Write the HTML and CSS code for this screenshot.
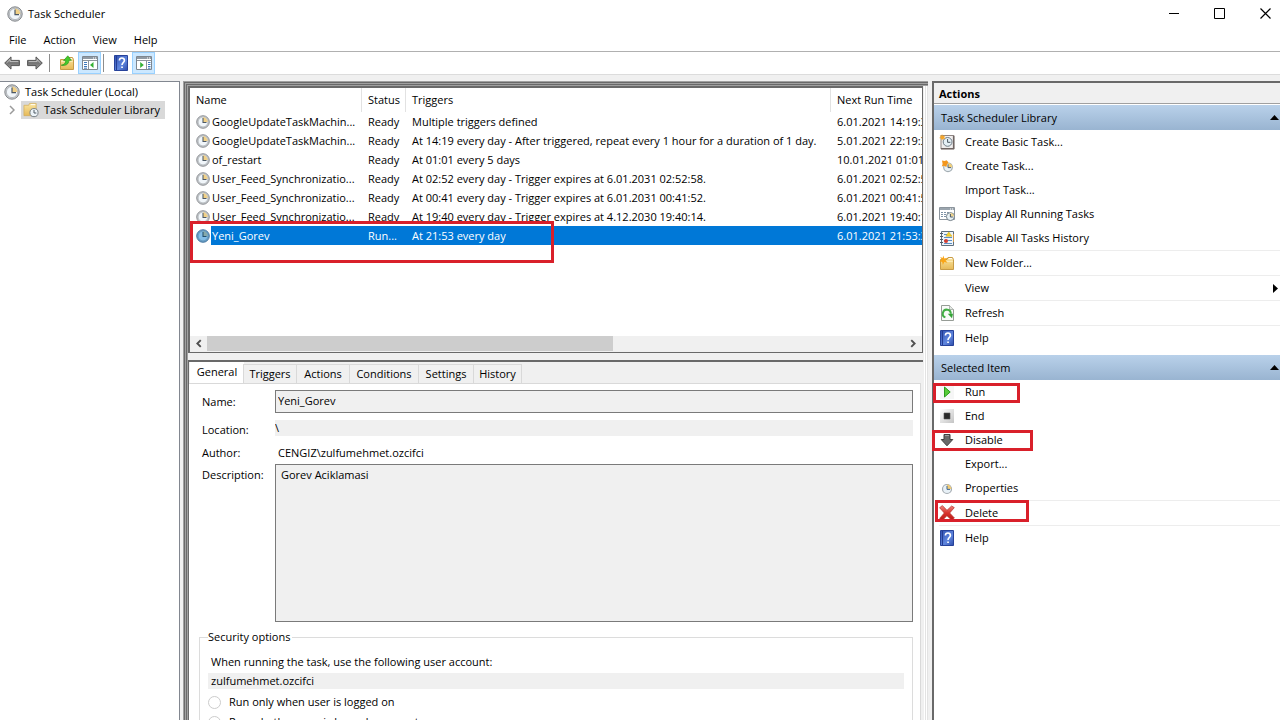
FILE: index.html
```html
<!DOCTYPE html>
<html lang="en">
<head>
<meta charset="utf-8">
<meta name="viewport" content="width=device-width, initial-scale=1">
<title>Task Scheduler</title>
<link rel="stylesheet" href="styles.css">
</head>
<body>
<svg class="defs" aria-hidden="true">
  <defs>
    <linearGradient id="g-arrow" x1="0" y1="0" x2="0" y2="1"><stop offset="0" stop-color="#a8a8a8"/><stop offset=".5" stop-color="#747474"/><stop offset="1" stop-color="#9c9c9c"/></linearGradient>
    <linearGradient id="g-folder" x1="0" y1="0" x2="0" y2="1"><stop offset="0" stop-color="#fbe6a2"/><stop offset="1" stop-color="#e6b957"/></linearGradient>
    <linearGradient id="g-help" x1="0" y1="0" x2="1" y2="1"><stop offset="0" stop-color="#2f4fb0"/><stop offset=".6" stop-color="#5f86de"/><stop offset="1" stop-color="#2d4ba8"/></linearGradient>
    <linearGradient id="g-stop" x1="0" y1="0" x2="1" y2="1"><stop offset="0" stop-color="#ffffff"/><stop offset="1" stop-color="#c4c4c4"/></linearGradient>
    <linearGradient id="g-red" x1="0" y1="0" x2="0" y2="1"><stop offset="0" stop-color="#ef8a84"/><stop offset=".5" stop-color="#d8322b"/><stop offset="1" stop-color="#b81a16"/></linearGradient>
  </defs>
  <symbol id="clock" viewBox="0 0 16 16">
    <circle cx="8" cy="8" r="7.2" fill="#c9cccf" stroke="#83878b"/>
    <circle cx="8" cy="8" r="5.6" fill="#f1f6fa" stroke="#a3a8ad" stroke-width=".7"/>
    <path d="M8 8V2.6A5.4 5.4 0 0 1 13.4 8Z" fill="#f0d087"/>
    <path d="M8 3.4V8.6H12" fill="none" stroke="#4d5965" stroke-width="1.2"/>
  </symbol>
  <symbol id="clock-sel" viewBox="0 0 16 16">
    <circle cx="8" cy="8" r="7.2" fill="#6fa4cb" stroke="#386a96"/>
    <circle cx="8" cy="8" r="5.6" fill="#82bde6" stroke="#5588ae" stroke-width=".7"/>
    <path d="M8 8V2.6A5.4 5.4 0 0 1 13.4 8Z" fill="#86a9a9"/>
    <path d="M8 3.4V8.6H12" fill="none" stroke="#23506f" stroke-width="1.2"/>
  </symbol>
  <symbol id="back" viewBox="0 0 16 14">
    <path d="M.7 7 7 .9V4.4H15.4V9.6H7V13.1Z" fill="url(#g-arrow)" stroke="#555"/>
    <path d="M2.5 7 6 3.6V5.5H14.2" fill="none" stroke="#c8c8c8" stroke-width=".8"/>
  </symbol>
  <symbol id="forward" viewBox="0 0 16 14">
    <path d="M15.3 7 9 .9V4.4H.6V9.6H9V13.1Z" fill="url(#g-arrow)" stroke="#555"/>
    <path d="M1.8 5.5H10V3.6L13.5 7" fill="none" stroke="#c8c8c8" stroke-width=".8"/>
  </symbol>
  <symbol id="folder" viewBox="0 0 16 16">
    <path d="M1.5 14.5V4.5H8L9 2.5H13.5L14.5 4.5V14.5Z" fill="url(#g-folder)" stroke="#c79b46"/>
    <path d="M9.8 3.6H13" stroke="#fff" stroke-width="1"/>
    <path d="M2.3 6.4H13.8" stroke="#fff3c8" stroke-width=".8"/>
  </symbol>
  <symbol id="folder-up" viewBox="0 0 16 16">
    <use href="#folder"/>
    <path d="M2.2 10.2C5 9.8 6.6 8.4 6.8 5.6H4.6L8.8.8 12.4 5.3H10C9.8 9 7 11.2 2.2 10.2Z" fill="#45c92c" stroke="#238d14" stroke-width=".6"/>
  </symbol>
  <symbol id="folder-clock" viewBox="0 0 17 16">
    <path d="M1 14V3H6L7 1H14V14Z" fill="url(#g-folder)" stroke="#d3ad5c" stroke-width=".8"/>
    <path d="M8.2 2.3H13" stroke="#fff"/>
    <circle cx="11.7" cy="10.8" r="4.3" fill="#edf4f8" stroke="#6f7980"/>
    <path d="M11.7 8V11.2H14.2" fill="none" stroke="#44515c"/>
  </symbol>
  <symbol id="folder-new" viewBox="0 0 16 16">
    <use href="#folder"/>
    <path d="M4.2 .5 5.4 3.4 8.4 2.8 6.6 5.2 8.4 7.8 5.3 7.1 3.9 10 3.2 6.9.4 6.3 2.7 4.6 1.2 2 3.7 3Z" fill="#f9a517"/>
  </symbol>
  <symbol id="pane-left" viewBox="0 0 16 14">
    <path d="M.5.5H15.5V13.5H.5Z" fill="#fff" stroke="#7e8790"/>
    <path d="M1 1H15V3H1Z" fill="#909aa4"/><path d="M11 2H12M13 2H14" stroke="#fff"/>
    <path d="M1 4.5H15M6.5 5V13" stroke="#8d959d"/>
    <path d="M2 6.5H5M2 8.5H5M2 10.5H5M2 12.2H5" stroke="#3d79bd"/>
    <path d="M8 9 11.5 6V12Z" fill="#35b135"/>
  </symbol>
  <symbol id="pane-right" viewBox="0 0 16 14">
    <path d="M.5.5H15.5V13.5H.5Z" fill="#fff" stroke="#7e8790"/>
    <path d="M1 1H15V3H1Z" fill="#909aa4"/><path d="M11 2H12M13 2H14" stroke="#fff"/>
    <path d="M1 4.5H15M10.5 5V13" stroke="#8d959d"/>
    <path d="M12 6.5H14.5M12 8.5H14.5M12 10.5H14.5M12 12.2H14.5" stroke="#3d79bd"/>
    <path d="M7.8 9 4.2 6V12Z" fill="#35b135"/>
  </symbol>
  <symbol id="help" viewBox="0 0 14 16">
    <path d="M.5.5H13.5V15.5H.5Z" fill="url(#g-help)" stroke="#27429a"/>
    <path d="M2.5 1V15" stroke="#243d92"/>
    <path d="M5.4 5.6C5.4 3.8 6.4 3 7.9 3S10.4 4 10.4 5.4C10.4 7.4 8 7.6 8 10" fill="none" stroke="#fff" stroke-width="1.6"/>
    <path d="M7.2 11.4H8.9V13.1H7.2Z" fill="#fff"/>
  </symbol>
  <symbol id="basic" viewBox="0 0 16 16">
    <path d="M2 1.5H15V15H2Z" fill="#f0eeee" stroke="#8f8583"/>
    <path d="M14.6 2V14.6H2" fill="none" stroke="#6f6563" stroke-width="1.4"/>
    <circle cx="8.6" cy="7.9" r="4.4" fill="#e5f0f6" stroke="#6f7c86"/>
    <path d="M8.6 5V8.3H11.4" fill="none" stroke="#48545e"/>
    <path d="M3 0 3.9 2 6.2 1.4 5.2 3.2 6.4 5.2 4.1 4.7 3 6.6 2.1 4.5 0 4.1 1.8 3 .8 1.2 2.6 1.8Z" fill="#f4a62a"/>
  </symbol>
  <symbol id="new-clock" viewBox="0 0 16 16">
    <circle cx="9" cy="9.3" r="4.3" fill="#eaf2f6" stroke="#a3adb3" stroke-width="1.2"/>
    <path d="M9 9.3V5A4.3 4.3 0 0 1 13.3 9.3Z" fill="#f1cf78"/>
    <path d="M9 6.3V9.6H12" fill="none" stroke="#566370"/>
    <path d="M3 2.4 5.6 3 7.6 2.2 9.4 4.2 8 6.4 7.4 9 5 7.8 2.8 8.6 3.6 6Z" fill="#f3971d"/>
  </symbol>
  <symbol id="small-clock" viewBox="0 0 16 16">
    <circle cx="8" cy="9" r="4.5" fill="#e8f1f7" stroke="#a4abb1" stroke-width="1.2"/>
    <path d="M8 9V4.6A4.4 4.4 0 0 1 12.4 9Z" fill="#f0cb77"/>
    <path d="M8 6V9.4H11" fill="none" stroke="#3f6590"/>
  </symbol>
  <symbol id="running" viewBox="0 0 16 16">
    <path d="M.5 1.5H15.5V13.5H.5Z" fill="#fff" stroke="#8c959d"/>
    <path d="M1 2H15V4H1Z" fill="#9ba5ae"/><path d="M11 3H12M13 3H14" stroke="#fff"/>
    <path d="M2 6.5H4M5 6.5H7M8 6.5H10M2 8.5H4M5 8.5H7M2 10.5H4M5 10.5H7" stroke="#7e93a6"/>
    <circle cx="11.4" cy="10.6" r="4" fill="#e9f2f6" stroke="#737f88"/>
    <path d="M11.4 10.6V7A3.6 3.6 0 0 1 15 10.6Z" fill="#efd38d"/>
    <path d="M11.4 8V11H13.8" fill="none" stroke="#4a5762"/>
  </symbol>
  <symbol id="history" viewBox="0 0 16 16">
    <path d="M2.5 1.5H14.5V15.5H2.5Z" fill="#eef4fa" stroke="#5f6f7d"/>
    <path d="M1 3.5H4M1 6.5H4M1 9.5H4M1 12.5H4" stroke="#4e5a65"/>
    <path d="M5 4.5H8M5 7.5H13M5 10.5H13M5 13.5H13" stroke="#5b8fc2"/>
    <path d="M9.8 2 13 6.2H6.8Z" fill="#f6d32c" stroke="#c7a215" stroke-width=".5"/>
    <circle cx="7" cy="11" r="2" fill="#d23c30"/>
    <path d="M14.5 4V12" stroke="#d3984a"/>
  </symbol>
  <symbol id="refresh" viewBox="0 0 16 16">
    <path d="M2.5.5H10.5L14.5 4.5V15.5H2.5Z" fill="#f9fbf9" stroke="#969c96"/>
    <path d="M10.5.5V4.5H14.5" fill="#e4e8e4" stroke="#969c96" stroke-width=".7"/>
    <path d="M6.4 12.4A4 4 0 1 1 11.8 8.8" fill="none" stroke="#42ae45" stroke-width="2"/>
    <path d="M8.8 8.8H14L13 13.2Z" fill="#35a338"/>
  </symbol>
  <symbol id="run" viewBox="0 0 16 16">
    <path d="M1 1H15V15H1Z" fill="#f6f6f6"/>
    <path d="M5.5 3 11.2 8 5.5 13Z" fill="#57cb38" stroke="#2b9b1d"/>
  </symbol>
  <symbol id="end" viewBox="0 0 16 16">
    <path d="M1 1H15V15H1Z" fill="url(#g-stop)"/>
    <path d="M5 5H11V11H5Z" fill="#292929" stroke="#555" stroke-width=".6"/>
  </symbol>
  <symbol id="disable" viewBox="0 0 16 16">
    <path d="M5 2.5H11V7.5H13.8L8 13.8 2.2 7.5H5Z" fill="#696969" stroke="#3f3f3f"/>
    <path d="M6 3.5H10" stroke="#a0a0a0"/>
  </symbol>
  <symbol id="delete" viewBox="0 0 16 16">
    <path d="M.6 2.7 3.4.6 8 5.3 12.6 1 15.3 2.6 10.7 8 15.4 13 12.8 15.3 7.9 10.7 3.5 15.3.6 13.4 5.3 8Z" fill="url(#g-red)" stroke="#b5332e" stroke-width=".7"/>
  </symbol>
</svg>

<header class="titlebar">
  <svg class="i16"><use href="#clock"/></svg>
  <h1>Task Scheduler</h1>
  <div class="window-buttons">
    <button aria-label="Minimize"><svg class="i11"><path d="M0 5.5H10" stroke="#000"/></svg></button>
    <button aria-label="Maximize"><svg class="i11"><path d="M.5.5H10.5V10.5H.5Z" fill="none" stroke="#000"/></svg></button>
    <button aria-label="Close"><svg class="i11"><path d="M.5.5 10.5 10.5M10.5.5.5 10.5" stroke="#000" stroke-width="1.2"/></svg></button>
  </div>
</header>
<nav class="menubar">
  <button>File</button><button>Action</button><button>View</button><button>Help</button>
</nav>
<div class="toolbar">
  <button aria-label="Back"><svg class="i-arrow"><use href="#back"/></svg></button>
  <button aria-label="Forward"><svg class="i-arrow"><use href="#forward"/></svg></button>
  <span class="divider"></span>
  <button class="tool" aria-label="Up one level"><svg class="i16"><use href="#folder-up"/></svg></button>
  <button class="tool on" aria-label="Console tree"><svg class="i-arrow"><use href="#pane-left"/></svg></button>
  <span class="divider tight"></span>
  <button class="tool" aria-label="Help"><svg class="i16"><use href="#help"/></svg></button>
  <button class="tool on" aria-label="Action pane"><svg class="i-arrow"><use href="#pane-right"/></svg></button>
</div>

<main class="workspace">
  <aside class="tree">
    <div class="root"><svg class="i16"><use href="#clock"/></svg>Task Scheduler (Local)</div>
    <div class="branch">
      <svg class="chevron" viewBox="0 0 6 10"><path d="M1 1 5 5 1 9" fill="none" stroke="#9a9a9a" stroke-width="1.5"/></svg>
      <span class="leaf"><svg class="i16"><use href="#folder-clock"/></svg>Task Scheduler Library</span>
    </div>
  </aside>

  <section class="center">
    <div class="list">
      <div class="list-view">
        <table>
          <colgroup><col class="c-name"><col class="c-status"><col class="c-trig"><col></colgroup>
          <thead><tr><th>Name</th><th>Status</th><th>Triggers</th><th>Next Run Time</th></tr></thead>
          <tbody>
            <tr><td><span class="task"><svg class="i14"><use href="#clock"/></svg><span>GoogleUpdateTaskMachin...</span></span></td><td>Ready</td><td>Multiple triggers defined</td><td>6.01.2021 14:19:35</td></tr>
            <tr><td><span class="task"><svg class="i14"><use href="#clock"/></svg><span>GoogleUpdateTaskMachin...</span></span></td><td>Ready</td><td>At 14:19 every day - After triggered, repeat every 1 hour for a duration of 1 day.</td><td>5.01.2021 22:19:35</td></tr>
            <tr><td><span class="task"><svg class="i14"><use href="#clock"/></svg><span>of_restart</span></span></td><td>Ready</td><td>At 01:01 every 5 days</td><td>10.01.2021 01:01:00</td></tr>
            <tr><td><span class="task"><svg class="i14"><use href="#clock"/></svg><span>User_Feed_Synchronizatio...</span></span></td><td>Ready</td><td>At 02:52 every day - Trigger expires at 6.01.2031 02:52:58.</td><td>6.01.2021 02:52:58</td></tr>
            <tr><td><span class="task"><svg class="i14"><use href="#clock"/></svg><span>User_Feed_Synchronizatio...</span></span></td><td>Ready</td><td>At 00:41 every day - Trigger expires at 6.01.2031 00:41:52.</td><td>6.01.2021 00:41:52</td></tr>
            <tr><td><span class="task"><svg class="i14"><use href="#clock"/></svg><span>User_Feed_Synchronizatio...</span></span></td><td>Ready</td><td>At 19:40 every day - Trigger expires at 4.12.2030 19:40:14.</td><td>6.01.2021 19:40:14</td></tr>
            <tr class="selected"><td><span class="task"><svg class="i14"><use href="#clock-sel"/></svg><span>Yeni_Gorev</span></span></td><td>Run...</td><td>At 21:53 every day</td><td>6.01.2021 21:53:35</td></tr>
          </tbody>
        </table>
      </div>
      <div class="scrollbar">
        <button aria-label="Scroll left"><svg viewBox="0 0 6 8"><path d="M5 1 2 4 5 7" fill="none" stroke="#505050" stroke-width="1.7"/></svg></button>
        <div class="track"><div class="thumb"></div></div>
        <button aria-label="Scroll right"><svg viewBox="0 0 6 8"><path d="M1 1 4 4 1 7" fill="none" stroke="#505050" stroke-width="1.7"/></svg></button>
      </div>
      <span class="mark mark-row"></span>
    </div>

    <div class="details">
      <div class="tabs" role="tablist">
        <button class="active" role="tab" aria-selected="true">General</button><button role="tab">Triggers</button><button role="tab">Actions</button><button class="wide" role="tab">Conditions</button><button class="mid" role="tab">Settings</button><button class="short" role="tab">History</button>
      </div>
      <form class="panel">
        <div class="fields">
          <label for="name">Name:</label>
          <input id="name" class="boxed" value="Yeni_Gorev" readonly>
          <label for="location" class="low">Location:</label>
          <input id="location" class="flat" value="\" readonly>
          <span>Author:</span>
          <span class="author">CENGIZ\zulfumehmet.ozcifci</span>
          <label for="description" class="top">Description:</label>
          <textarea id="description" class="boxed" readonly>Gorev Aciklamasi</textarea>
        </div>
        <fieldset>
          <legend>Security options</legend>
          <label class="prompt" for="account">When running the task, use the following user account:</label>
          <input id="account" class="flat account" value="zulfumehmet.ozcifci" readonly>
          <label class="choice"><input type="radio" name="logon">Run only when user is logged on</label>
          <label class="choice"><input type="radio" name="logon">Run whether user is logged on or not</label>
        </fieldset>
      </form>
    </div>
  </section>

  <aside class="actions">
    <h2>Actions</h2>
    <h3>Task Scheduler Library<svg class="tri" viewBox="0 0 9 5"><path d="M4.5 0 9 5H0Z"/></svg></h3>
    <ul>
      <li><button><svg class="i16"><use href="#basic"/></svg>Create Basic Task...</button></li>
      <li><button><svg class="i16"><use href="#new-clock"/></svg>Create Task...</button></li>
      <li><button><svg class="i16"></svg>Import Task...</button></li>
      <li><button><svg class="i16"><use href="#running"/></svg>Display All Running Tasks</button></li>
      <li><button><svg class="i16"><use href="#history"/></svg>Disable All Tasks History</button></li>
      <li class="sep"><button><svg class="i16"><use href="#folder-new"/></svg>New Folder...</button></li>
      <li class="sep"><button><svg class="i16"></svg>View<svg class="sub" viewBox="0 0 5 9"><path d="M0 0 5 4.5 0 9Z"/></svg></button></li>
      <li class="sep"><button><svg class="i16"><use href="#refresh"/></svg>Refresh</button></li>
      <li class="sep"><button><svg class="i16"><use href="#help"/></svg>Help</button></li>
    </ul>
    <h3>Selected Item<svg class="tri" viewBox="0 0 9 5"><path d="M4.5 0 9 5H0Z"/></svg></h3>
    <ul>
      <li><button><svg class="i16"><use href="#run"/></svg>Run</button><span class="mark mark-run"></span></li>
      <li><button><svg class="i16"><use href="#end"/></svg>End</button></li>
      <li><button><svg class="i16"><use href="#disable"/></svg>Disable</button><span class="mark mark-disable"></span></li>
      <li><button><svg class="i16"></svg>Export...</button></li>
      <li><button><svg class="i16"><use href="#small-clock"/></svg>Properties</button></li>
      <li class="sep"><button><svg class="i16"><use href="#delete"/></svg>Delete</button><span class="mark mark-delete"></span></li>
      <li class="sep"><button><svg class="i16"><use href="#help"/></svg>Help</button></li>
    </ul>
  </aside>
</main>
</body>
</html>
```
FILE: styles.css
```css
* { box-sizing: border-box; }

body {
  margin: 0;
  height: 100vh;
  display: flex;
  flex-direction: column;
  overflow: hidden;
  background: #fff;
  color: #000;
  font: 11px/16px "Open Sans", "Noto Sans", sans-serif;
}

button, input, textarea { font: inherit; color: inherit; }
button { border: 0; padding: 0; background: none; }
svg { display: block; flex: none; }

.defs { position: absolute; width: 0; height: 0; }
.i16 { width: 16px; height: 16px; }
.i14 { width: 14px; height: 14px; }
.i11 { width: 11px; height: 11px; }
.i-arrow { width: 16px; height: 14px; }

/* Window chrome */
.titlebar { display: flex; align-items: center; height: 28px; padding: 0 0 1px 7px; flex: none; }
.titlebar h1 { margin: 0 0 0 5px; font-size: 11px; font-weight: 400; }
.window-buttons { display: flex; margin-left: auto; }
.window-buttons button { display: grid; place-items: center; width: 45px; height: 27px; }
.window-buttons button:last-child { width: 38px; padding-left: 18px; justify-content: start; }

.menubar {
  display: flex;
  gap: 17px;
  height: 24px;
  padding-left: 9px;
  border-bottom: 1px solid #b0b0b0;
  flex: none;
}

.toolbar {
  display: flex;
  align-items: center;
  height: 23px;
  padding-left: 4px;
  border-bottom: 1px solid #dcdcdc;
  flex: none;
}
.toolbar > button { margin-right: 7px; }
.toolbar > button:nth-child(2) { margin-right: 6px; }
.toolbar > .tool { display: grid; place-items: center; width: 23px; height: 22px; margin: 0; }
.toolbar .tool.on { background: #cce8ff; border: 1px solid #99d1ff; }
.divider { width: 1px; height: 18px; margin: 0 5px 0 0; background: #8d8d8d; }
.divider.tight { margin: 0 5px 0 2px; }

.workspace {
  flex: 1;
  min-height: 0;
  display: grid;
  grid-template-columns: 180px minmax(0, 1fr) 348px;
  gap: 4px;
  padding-top: 6px;
  background: #f0f0f0;
}

/* Console tree */
.tree { background: #fff; border: solid #828790; border-width: 1px 1px 0 0; padding-top: 1px; }
.root { display: flex; align-items: center; gap: 5px; height: 18px; padding-left: 4px; }
.branch { display: flex; align-items: center; padding-left: 9px; }
.chevron { width: 6px; height: 10px; margin-right: 6px; }
.leaf { display: flex; align-items: center; gap: 5px; height: 18px; padding: 0 5px 0 2px; background: #d9d9d9; }

/* Center pane */
.center {
  display: flex;
  flex-direction: column;
  min-height: 0;
  margin-left: -1px;
  padding: 5px 5px 0 5px;
  box-shadow:
    inset 1px 1px #a0a0a0, inset 2px 2px #696969,
    inset 3px 3px #a0a0a0, inset 4px 4px #696969, inset 5px 5px #a0a0a0,
    inset -1px 0 #e3e3e3, inset -2px 0 #fff, inset -3px 0 #e3e3e3, inset -4px 0 #fff;
}

.list {
  position: relative;
  flex: none;
  background: #fff;
  border: 1px solid #696969;
  border-width: 2px 1px 1px 2px;
}
.list-view { height: 248px; overflow: hidden; }
table { width: 100%; table-layout: fixed; border-collapse: separate; border-spacing: 0; }
.c-name { width: 172px; }
.c-status { width: 44px; }
.c-trig { width: 425px; }
th, td { padding: 0 0 0 6px; text-align: left; font-weight: 400; white-space: nowrap; overflow: hidden; }
th { height: 24px; border-right: 1px solid #e2e2e2; }
th:last-child { border-right: 0; }
td { height: 19px; }
.task { display: flex; align-items: center; gap: 1px; }
.task > span { flex: 1; padding-left: 1px; line-height: 19px; }
.selected td { background: #0078d7; color: #fff; }
.selected td:first-child { background: #fff; }
.selected .task > span { background: #0078d7; }

.scrollbar { display: flex; height: 16px; background: #f0f0f0; }
.scrollbar button { display: grid; place-items: center; width: 17px; height: 15px; }
.scrollbar svg { width: 7px; height: 9px; }
.track { flex: 1; }
.thumb { width: 58.2%; height: 15px; background: #cdcdcd; }

/* Task details */
.details {
  flex: 1;
  min-height: 0;
  display: flex;
  flex-direction: column;
  margin-top: 7px;
  padding-right: 2px;
  border: solid #696969;
  border-width: 2px 0 0 1px;
}
.tabs { display: flex; align-items: flex-end; height: 21px; padding-left: 1px; }
.tabs button { width: 54px; height: 19px; margin-right: -1px; border: 1px solid #d9d9d9; border-bottom: 0; text-align: center; line-height: 18px; }
.tabs .active { width: 54px; height: 21px; background: #fff; border-color: #fff; padding-bottom: 2px; }
.tabs .wide { width: 70px; }
.tabs .mid { width: 56px; }
.tabs .short { width: 49px; }

.panel { flex: 1; min-height: 0; overflow: hidden; background: #fff; border: 1px solid #d9d9d9; border-width: 1px 1px 0 0; padding: 6px 7px 0 10px; }
.fields {
  display: grid;
  grid-template-columns: 73px minmax(0, 1fr);
  grid-template-rows: 23px 26px 19px 158px;
  align-items: center;
  padding-left: 3px;
  row-gap: 2px;
}
.boxed { width: 100%; height: 23px; padding: 0 2px 2px; border: 1px solid #7a7a7a; background: #f0f0f0; outline: 0; border-radius: 0; }
.flat { width: 100%; height: 16px; padding: 0; border: 0; background: #f0f0f0; outline: 0; }
.author { padding-left: 3px; }
textarea.boxed { display: block; height: 158px; padding: 2px 5px; resize: none; }
.low { padding-top: 3px; }
.top { align-self: start; padding-top: 3px; }

fieldset { min-width: 0; margin: 7px 0 0; padding: 9px 8px 40px; border: 1px solid #dcdcdc; }
legend { padding: 0 2px 0 0; }
.prompt { display: block; padding-left: 3px; margin-bottom: 3px; }
.account { display: block; padding-left: 3px; margin-bottom: 3px; }
.choice { display: flex; align-items: center; gap: 8px; height: 20px; }
.choice input { appearance: none; width: 13px; height: 13px; margin: 0; border: 1px solid #ccc; border-radius: 50%; background: #fff; }

/* Actions pane */
.actions { background: #fff; border: solid #696969; border-width: 2px 0 0 2px; }
.actions h2 { margin: 0 0 1px; height: 21px; padding: 1px 0 0 5px; font-size: 11px; line-height: 20px; font-weight: 700; background: #f0f0f0; border-bottom: 1px solid #a0a0a0; }
.actions h3 {
  display: flex;
  align-items: center;
  justify-content: space-between;
  height: 25px;
  margin: 0;
  padding: 0 1px 0 7px;
  font-size: 11px;
  font-weight: 400;
  background: linear-gradient(#b9d1ea, #99b4d1);
}
.tri { width: 9px; height: 5px; }
.sub { width: 5px; height: 9px; margin-left: auto; }
.actions ul { margin: 0; padding: 0; list-style: none; }
.actions ul + h3 { margin-top: 5px; }
.actions li { position: relative; padding-left: 5px; }
.actions li button { display: flex; align-items: center; gap: 10px; width: 100%; height: 24px; padding: 0 2px 0 0; text-align: left; }
.actions .sep button { height: 25px; border-top: 1px solid #ededed; }

/* Red highlight frames drawn over the content */
.mark { position: absolute; border: 3px solid #d9202a; pointer-events: none; }
.mark-row { left: 0; top: 133px; width: 364px; height: 42px; }
.mark-run { left: -1px; top: 3px; width: 87px; height: 20px; }
.mark-disable { left: -2px; top: 2px; width: 101px; height: 21px; }
.mark-delete { left: 1px; top: 0; width: 94px; height: 22px; }
```
